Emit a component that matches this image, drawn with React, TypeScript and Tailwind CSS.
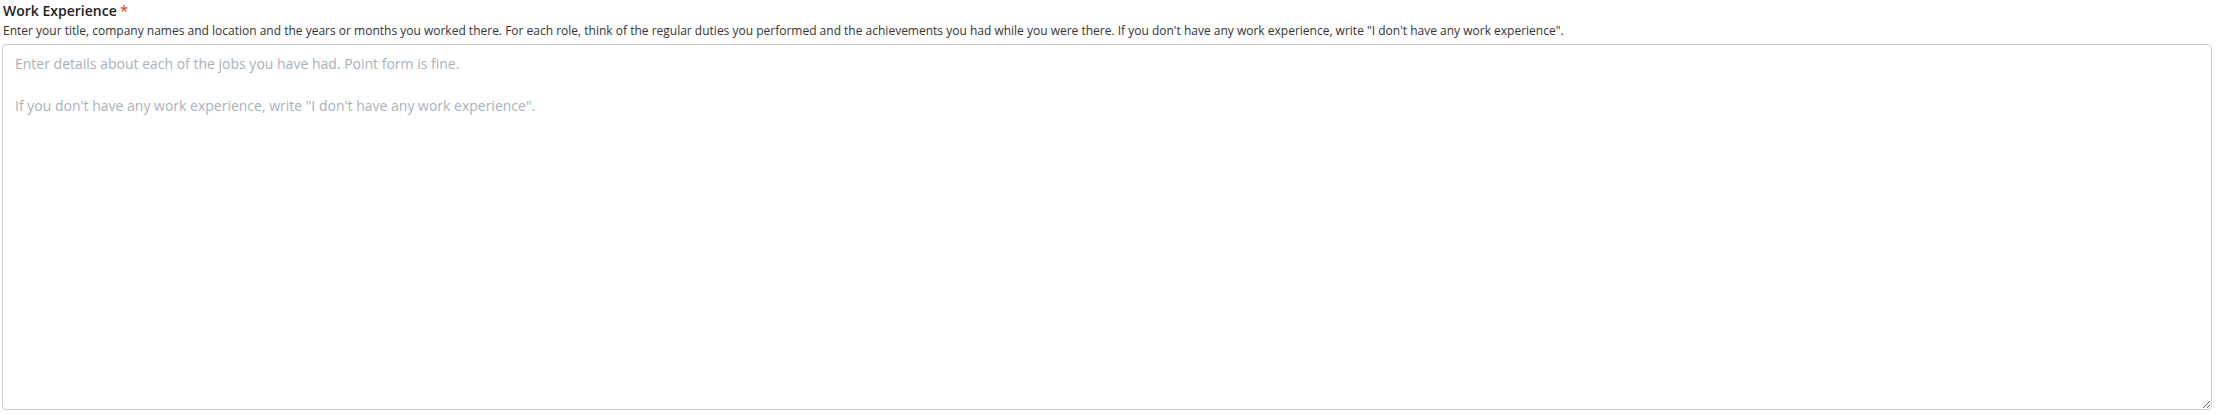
import React from 'react';

const App: React.FC = () => {
  return (
    <div className="w-[2219px] h-[415px] bg-white pl-[2px] pr-[7px]" style={{ fontFamily: '"Open Sans", sans-serif' }}>
      <label htmlFor="workExperience" className="block pl-px pt-px text-[14px] leading-[19px] font-semibold text-[#222]">
        Work Experience <span className="text-[#e74c3c]">*</span>
      </label>
      <p className="pl-px mt-[2px] text-[12px] leading-[18px] text-[#333]">
        Enter your title, company names and location and the years or months you worked there. For each role, think of the regular duties you performed and the achievements you had while you were there. If you don't have any work experience, write "I don't have any work experience".
      </p>
      <textarea
        id="workExperience"
        className="block mt-[4px] w-full h-[366px] border border-[#ccc] rounded-[4px] px-[12px] py-[8px] text-[14px] leading-[21px] text-[#333] placeholder-[#aab0b8] outline-none"
        placeholder={"Enter details about each of the jobs you have had. Point form is fine.\n\nIf you don't have any work experience, write \"I don't have any work experience\"."}
      />
    </div>
  );
};

export default App;
